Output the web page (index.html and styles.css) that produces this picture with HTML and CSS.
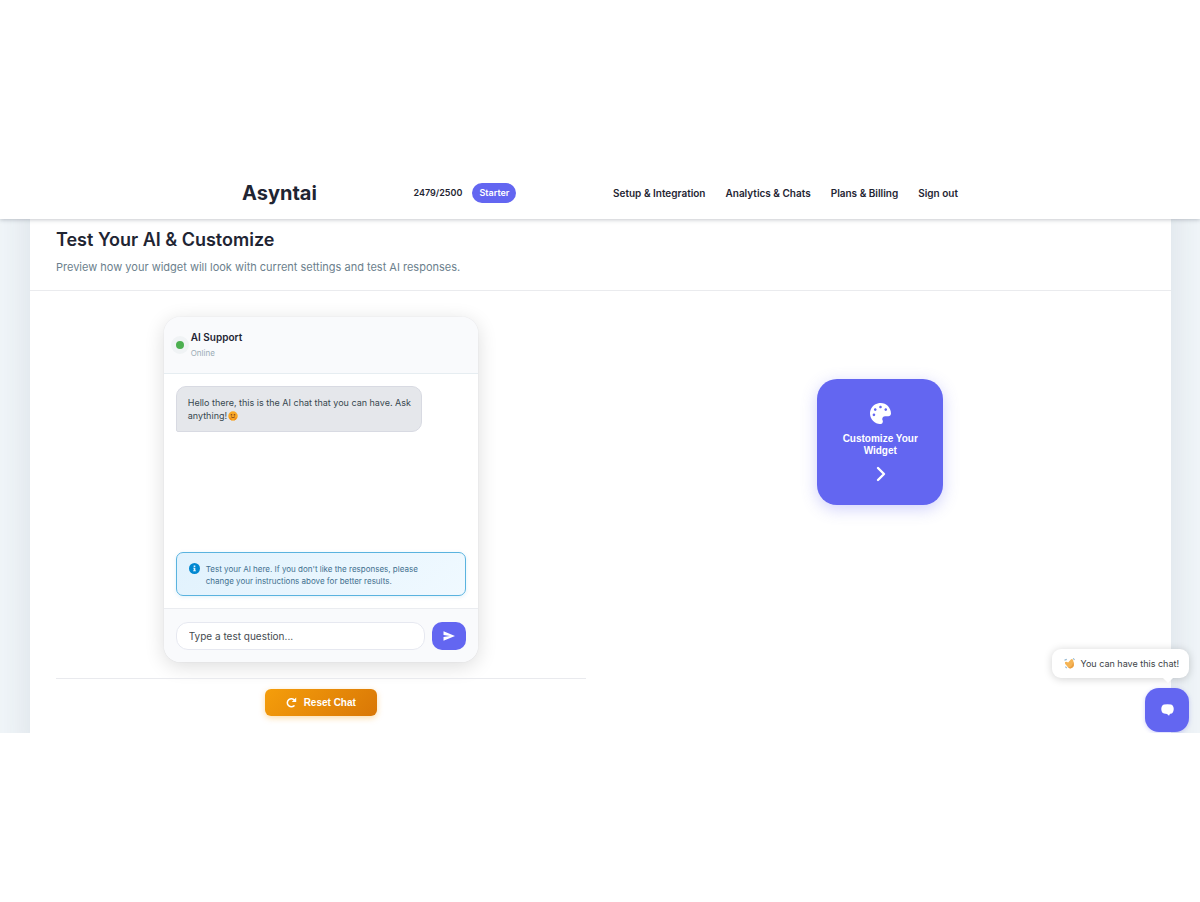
FILE: index.html
```html
<!DOCTYPE html>
<html lang="en">
<head>
<meta charset="utf-8">
<title>Asyntai</title>
<link rel="stylesheet" href="styles.css">
</head>
<body>
<div class="app">
  <header class="topbar">
    <div class="topbar-inner">
      <a class="logo" href="#">Asyntai</a>
      <div class="usage"><span>2479/2500</span><span class="plan">Starter</span></div>
      <nav class="nav">
        <a href="#">Setup &amp; Integration</a>
        <a href="#">Analytics &amp; Chats</a>
        <a href="#">Plans &amp; Billing</a>
        <a href="#">Sign out</a>
      </nav>
    </div>
  </header>
  <main class="main">
    <section class="panel">
      <div class="panel-head">
        <h1>Test Your AI &amp; Customize</h1>
        <p>Preview how your widget will look with current settings and test AI responses.</p>
      </div>
      <div class="columns">
        <div class="preview">
          <div class="chat">
            <div class="chat-head">
              <span class="status"></span>
              <div>
                <h2>AI Support</h2>
                <p>Online</p>
              </div>
            </div>
            <div class="chat-body">
              <div class="bubble">Hello there, this is the AI chat that you can have. Ask anything!<svg class="smile" viewBox="0 0 20 20" aria-hidden="true"><circle cx="10" cy="10" r="9.500" fill="#f9a825"/><circle cx="7" cy="7.500" r="1.700" fill="#8a4b1c"/><circle cx="13" cy="7.500" r="1.700" fill="#8a4b1c"/><path d="M6 11.500q4 4 8 0" fill="none" stroke="#8a4b1c" stroke-width="1.800"/><path d="M2 12l5 3 1 4.500Q3 18 2 12zM18 12l-5 3-1 4.500Q17 18 18 12z" fill="#ef8a17"/></svg></div>
              <div class="notice">
                <svg viewBox="0 0 20 20" aria-hidden="true"><circle cx="10" cy="10" r="10" fill="#0288d1"/><path d="M8.500 4.500h3v2.600h-3zM7.500 8.500h4v5h1.200V15.200H7.300V13.500h1.400v-3.300H7.500z" fill="#e3f3fd"/></svg>
                <p>Test your AI here. If you don't like the responses, please change your instructions above for better results.</p>
              </div>
            </div>
            <form class="composer">
              <input type="text" placeholder="Type a test question..." aria-label="Test question">
              <button type="button" class="send" aria-label="Send"><svg viewBox="0 0 24 20" aria-hidden="true"><path d="M1 0.500L24 10 1 19.500V12.200L14 10 1 7.800z" fill="#fff"/></svg></button>
            </form>
          </div>
          <div class="reset-row">
            <button type="button" class="reset"><svg viewBox="0 0 20 20" aria-hidden="true"><path d="M14.500 16A7.300 7.300 0 1 1 15.500 6" fill="none" stroke="#fff" stroke-width="2.800" stroke-linecap="round"/><path d="M18.500 1v8h-8z" fill="#fff"/></svg>Reset Chat</button>
          </div>
        </div>
        <div class="customize">
          <button type="button" class="tile">
            <svg class="palette" viewBox="0 0 512 512" aria-hidden="true"><path fill="#fff" d="M204.300 5C104.900 24.400 24.800 104.300 5.200 203.400c-37 187 131.700 326.400 258.800 306.700 41.200-6.400 61.400-54.600 42.500-91.700-23.100-45.400 9.900-98.400 60.900-98.400h79.700c35.800 0 64.800-29.600 64.900-65.300C511.500 97.100 368.100-26.900 204.300 5zM96 320c-17.700 0-32-14.300-32-32s14.300-32 32-32 32 14.300 32 32-14.300 32-32 32zm32-128c-17.700 0-32-14.300-32-32s14.300-32 32-32 32 14.300 32 32-14.300 32-32 32zm128-64c-17.700 0-32-14.300-32-32s14.300-32 32-32 32 14.300 32 32-14.300 32-32 32zm128 64c-17.700 0-32-14.300-32-32s14.300-32 32-32 32 14.300 32 32-14.300 32-32 32z"/></svg>
            <span>Customize Your Widget</span>
            <svg class="chevron" viewBox="0 0 10 16" aria-hidden="true"><path d="M2 2l6 6-6 6" fill="none" stroke="#fff" stroke-width="2.400" stroke-linecap="round" stroke-linejoin="round"/></svg>
          </button>
        </div>
      </div>
    </section>
  </main>
  <aside class="launcher">
    <div class="tip"><svg viewBox="0 0 24 24" aria-hidden="true"><path d="M2 9Q5 7 9 10L15 3Q18 1 20 5L21 10Q23 20 16 22 9 24 6 17 1 13 2 9z" fill="#f5b455"/><path d="M9 20Q18 21 20 8 24 18 17 22 12 24 9 20z" fill="#eb9f40"/><path d="M1 5l5-2M3 19l3 3M20 1l3 3" stroke="#8fb4cf" stroke-width="2.400" fill="none"/></svg>You can have this chat!</div>
    <button type="button" class="chat-toggle" aria-label="Open chat"><svg viewBox="0 0 26 24" aria-hidden="true"><path d="M6 1Q13 0 20 1 25 2 25.500 10 25 18 20 19.500H18L16 23.500 12 19.800 6 19Q1 18 .5 10 1 2 6 1z" fill="#fff"/></svg></button>
  </aside>
</div>
</body>
</html>
```
FILE: styles.css
```css
* { box-sizing: border-box; }
body {
  margin: 0;
  padding: 166px 0;
  background: #fff;
  color: #1f2533;
  font-family: Inter, "Liberation Sans", sans-serif;
}
h1, h2, p { margin: 0; }
a { color: inherit; text-decoration: none; }
button { border: 0; padding: 0; color: #fff; }
svg { flex: none; }

.app { position: relative; overflow: hidden; }
.topbar {
  position: relative;
  z-index: 2;
  background: #fff;
  box-shadow: 0 1px 4px rgba(30, 40, 60, 0.25);
}
.topbar-inner {
  display: flex;
  align-items: center;
  justify-content: space-between;
  max-width: 716px;
  height: 53px;
  margin: 0 auto;
}
.logo { font-size: 20px; font-weight: 700; }
.usage { display: flex; align-items: center; gap: 10px; font-size: 9px; font-weight: 600; }
.plan {
  padding: 0 7px;
  border-radius: 10px;
  background: #6366f1;
  color: #fff;
  line-height: 20px;
}
.nav { display: flex; gap: 20px; font-size: 10px; font-weight: 600; }

.main {
  overflow: hidden;
  padding: 0 29px 0 30px;
  background: #f2f7fa;
}
.panel {
  margin: -40px 0;
  padding: 40px 0 57px;
  background: #fff;
  box-shadow: 0 0 44px rgba(30, 40, 70, 0.12);
}
.panel-head { padding: 9px 26px 15px; border-bottom: 1px solid #eaebee; }
.panel-head h1 { font-size: 18px; font-weight: 600; line-height: 24px; }
.panel-head p { margin-top: 7px; color: #6c7f8d; font-size: 11px; line-height: 16px; }
.columns { display: grid; grid-template-columns: 1fr 1fr; gap: 30px; padding: 26px 26px 0; }

.chat {
  width: 314px;
  margin: 0 auto;
  overflow: hidden;
  border-radius: 16px;
  background: #fff;
  box-shadow: 0 4px 20px rgba(0, 0, 0, 0.14), 0 0 1px rgba(60, 70, 120, 0.2);
}
.chat-head {
  display: flex;
  align-items: center;
  gap: 2px;
  height: 57px;
  padding: 0 7px;
  border-bottom: 1px solid #e6edf1;
  background: #f9fafc;
}
.status {
  width: 18px;
  height: 18px;
  border: 5px solid #f0f3f5;
  border-radius: 50%;
  background: #4caf50;
}
.chat-head h2 { font-size: 10px; font-weight: 600; line-height: 16px; }
.chat-head p { color: #9aabb5; font-size: 8px; line-height: 16px; }
.chat-body {
  display: flex;
  flex-direction: column;
  justify-content: space-between;
  height: 234px;
  padding: 12px;
}
.bubble {
  width: 246px;
  padding: 9px 6px 9px 11px;
  border: 1px solid #d8dae2;
  border-radius: 10px 10px 10px 2px;
  background: #e5e7eb;
  color: #37474f;
  font-size: 9px;
  line-height: 13px;
}
.smile { width: 10px; height: 10px; margin-left: 1px; vertical-align: -2px; }
.notice {
  display: flex;
  gap: 6px;
  padding: 10px 28px 8px 12px;
  border: 1px solid #5ab3df;
  border-radius: 7px;
  background: linear-gradient(135deg, #e1f2fd, #f0f9ff);
  box-shadow: 0 1px 4px rgba(2, 136, 209, 0.12);
  color: #42708f;
  font-size: 8px;
  line-height: 12px;
}
.notice svg { width: 11px; height: 11px; }
.composer {
  display: flex;
  gap: 7px;
  padding: 13px 12px 12px;
  border-top: 1px solid #eaecf0;
  background: #f9fafc;
}
.composer input {
  flex: 1;
  min-width: 0;
  height: 28px;
  padding: 0 12px;
  border: 1px solid #e6e8f0;
  border-radius: 12px;
  background: #fff;
  font: 10px Inter, "Liberation Sans", sans-serif;
}
.composer input::placeholder { color: #454b50; }
.send {
  display: grid;
  place-items: center;
  width: 34px;
  border-radius: 10px;
  background: #6366f1;
}
.send svg { width: 12px; height: 10px; }

.reset-row {
  display: flex;
  justify-content: center;
  margin-top: 16px;
  padding-top: 10px;
  border-top: 1px solid #e9eaee;
}
.reset {
  display: flex;
  align-items: center;
  justify-content: center;
  gap: 7px;
  width: 112px;
  height: 27px;
  border-radius: 6px;
  background: linear-gradient(135deg, #f59e0b, #d97706);
  box-shadow: 0 2px 6px rgba(245, 158, 11, 0.35);
  font: bold 10px "Liberation Sans", Arial, sans-serif;
}
.reset svg { width: 11px; height: 11px; }

.customize { display: flex; justify-content: center; align-items: flex-start; padding-top: 62px; }
.tile {
  display: flex;
  flex-direction: column;
  align-items: center;
  width: 126px;
  height: 126px;
  padding: 24px 20px 0;
  border-radius: 20px;
  background: #6366f1;
  box-shadow: 0 4px 16px rgba(99, 102, 241, 0.3);
  font: bold 10px/12px "Liberation Sans", Arial, sans-serif;
}
.palette { width: 21px; height: 21px; }
.tile span { margin: 9px 0; }
.chevron { width: 10px; height: 16px; margin-left: 1px; }

.launcher {
  position: absolute;
  z-index: 3;
  right: 11px;
  bottom: 1px;
  display: flex;
  flex-direction: column;
  align-items: flex-end;
  gap: 10px;
}
.tip {
  position: relative;
  display: flex;
  align-items: center;
  gap: 6px;
  height: 29px;
  padding: 0 10px 0 12px;
  border-radius: 9px;
  background: #fff;
  box-shadow: 0 1px 8px rgba(0, 0, 0, 0.18);
  color: #3c3f46;
  font-size: 9px;
}
.tip::after {
  content: "";
  position: absolute;
  right: 16px;
  bottom: -5px;
  border: 5px solid transparent;
  border-top-color: #fff;
  border-bottom: 0;
}
.tip svg { width: 11px; height: 11px; }
.chat-toggle {
  display: grid;
  place-items: center;
  width: 44px;
  height: 44px;
  border-radius: 14px;
  background: #6366f1;
  box-shadow: 0 1px 4px rgba(99, 102, 241, 0.3);
}
.chat-toggle svg { width: 13px; height: 12px; }
```
